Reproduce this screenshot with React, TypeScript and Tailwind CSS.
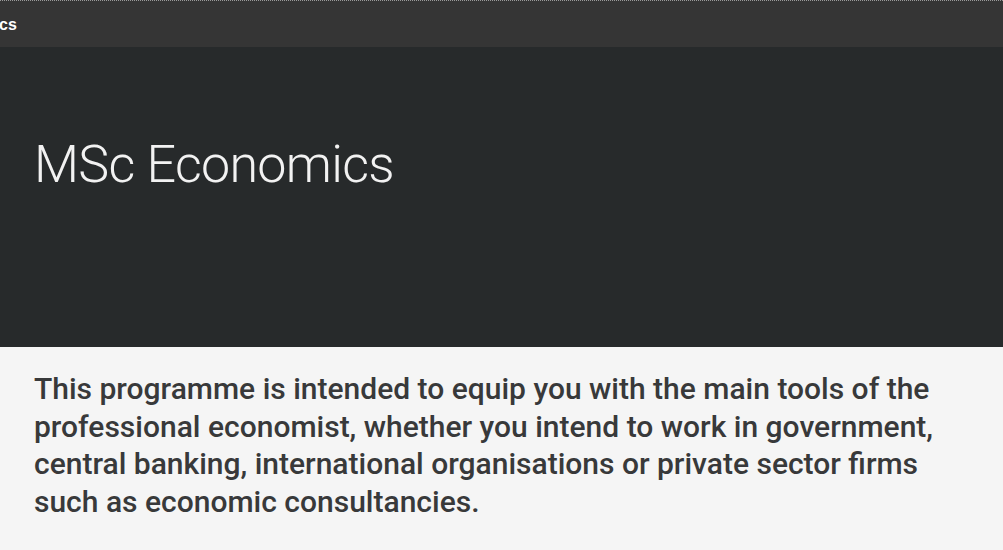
export default function App() {
  return (
    <div className="min-h-[550px] bg-[#f5f5f5] font-['Roboto',sans-serif]">
      <div className="h-[2px] bg-[#353535] border-t border-dotted border-[#9a9a9a]" />
      <div className="h-[45px] bg-[#353535] overflow-hidden flex items-start pt-[14px]">
        <span className="-ml-[1px] font-['Liberation_Sans',sans-serif] font-bold text-[16px] leading-[18px] text-white">
          cs
        </span>
      </div>
      <header className="h-[300px] bg-[#272a2b] px-[34px] pt-[92px]">
        <h1 className="text-[52px] font-light leading-none text-[#f2f2f2] tracking-[-0.7px]">
          MSc Economics
        </h1>
      </header>
      <section className="px-[34px] pt-[23px] pb-[30px]">
        <p className="max-w-[920px] text-[30px] font-medium leading-[37.5px] text-[#38393a]">
          This programme is intended to equip you with the main tools of the
          professional economist, whether you intend to work in government,
          central banking, international organisations or private sector firms
          such as economic consultancies.
        </p>
      </section>
    </div>
  )
}
